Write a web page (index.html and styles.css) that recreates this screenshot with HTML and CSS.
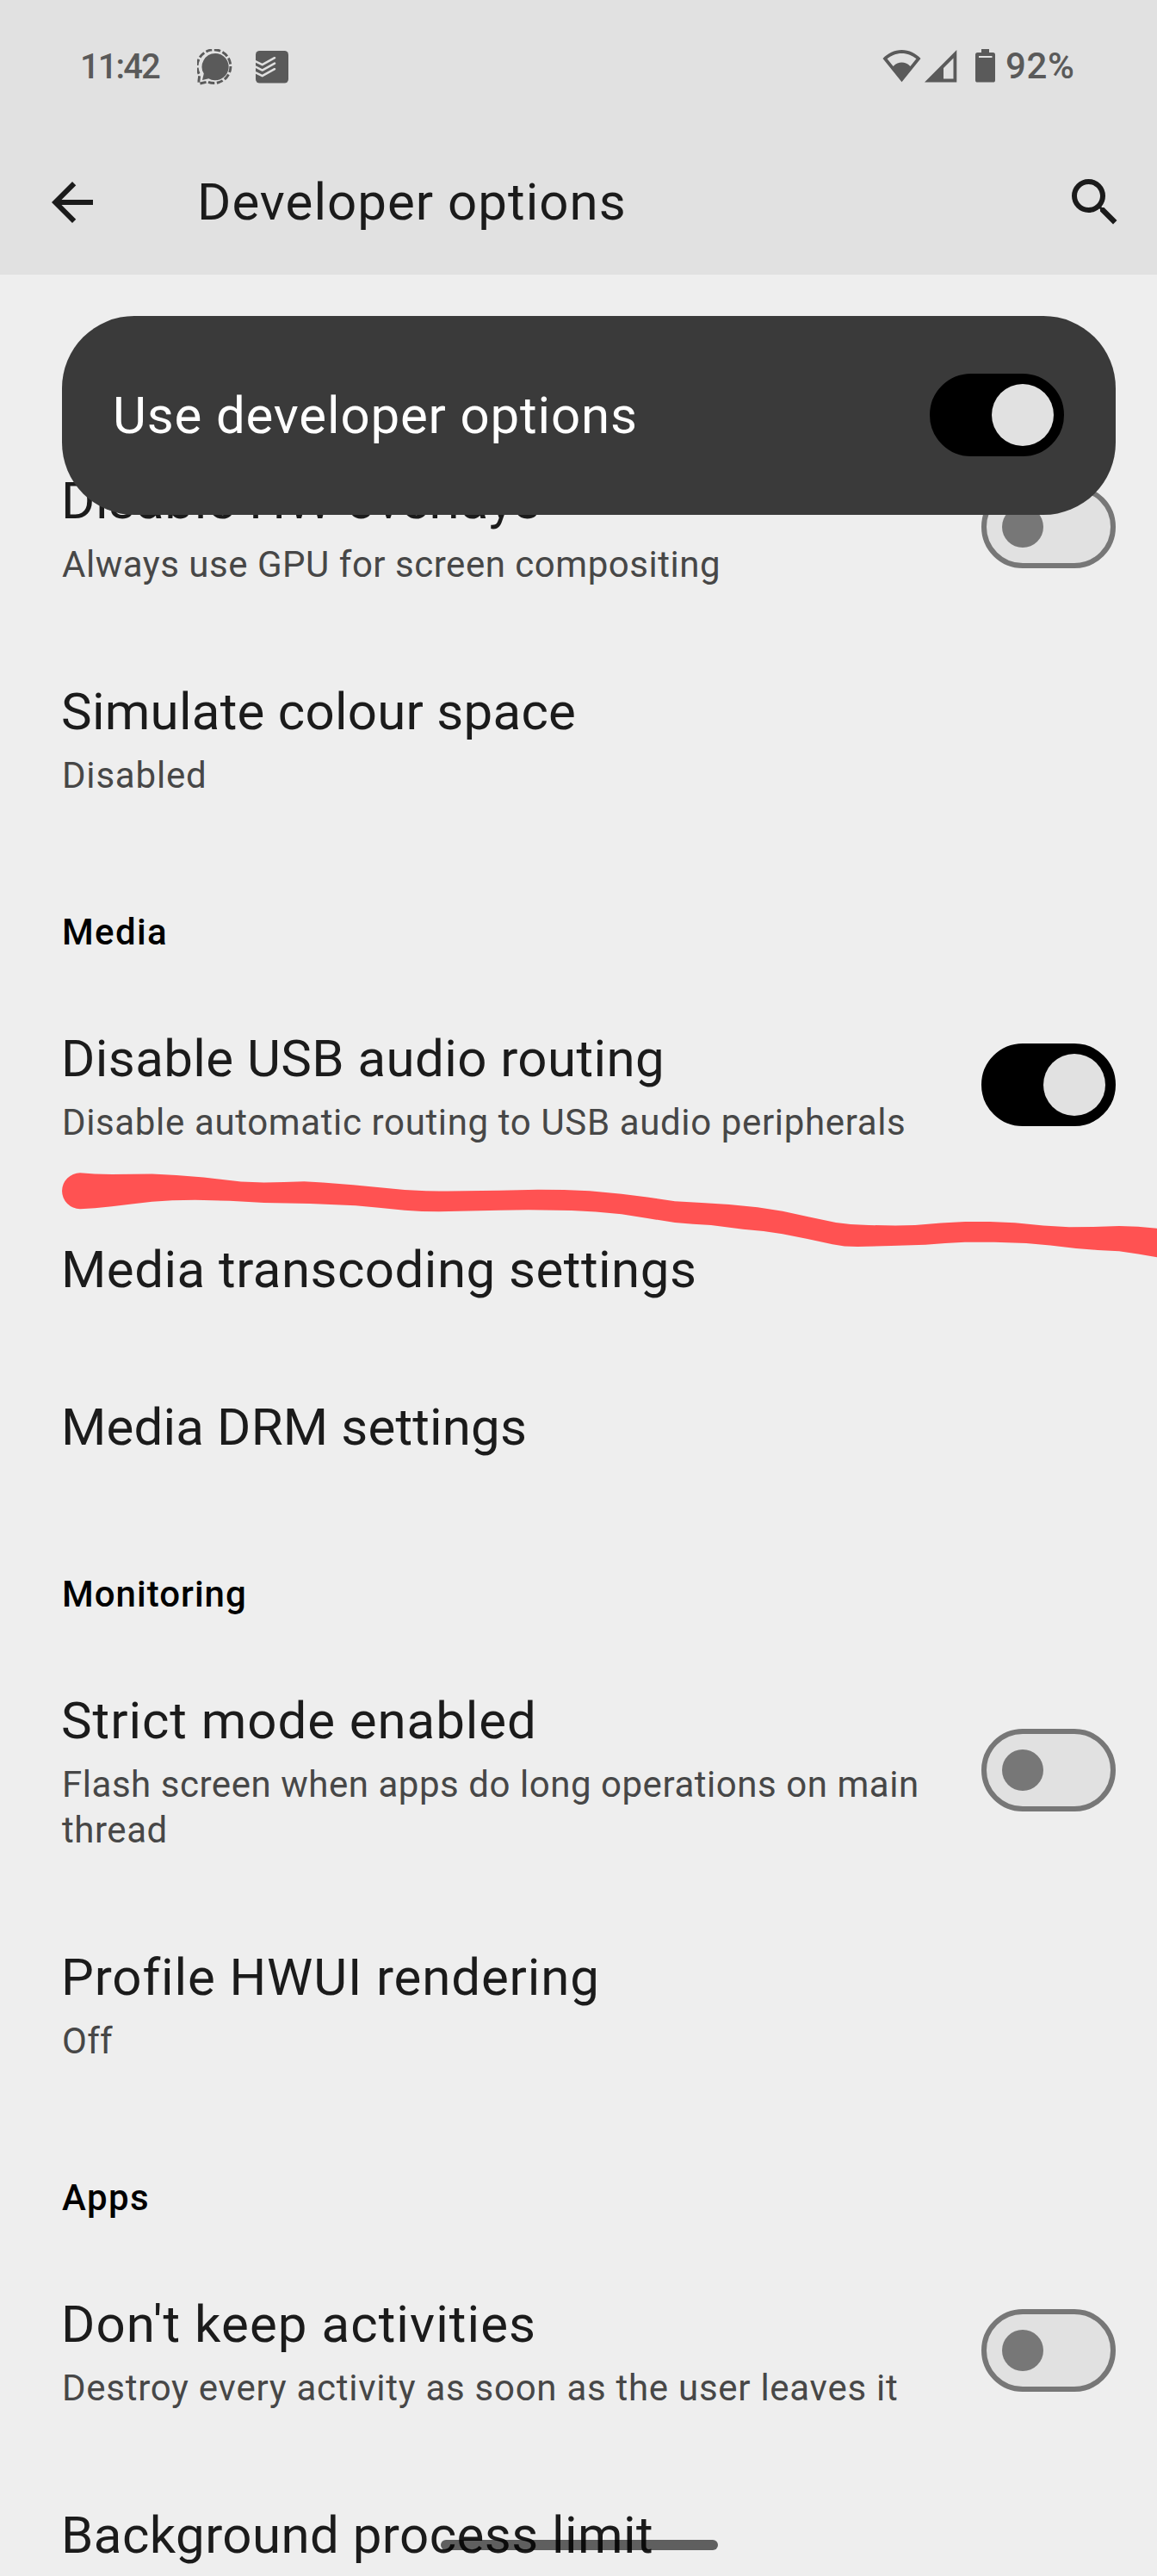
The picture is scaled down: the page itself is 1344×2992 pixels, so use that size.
FILE: index.html
```html
<!DOCTYPE html>
<html lang="en-GB">
<head>
<meta charset="utf-8">
<title>Developer options</title>
<link rel="stylesheet" href="styles.css">
</head>
<body>
<div class="screen">
  <header class="header">
    <div class="status">
      <span class="clock">11:42</span>
      <svg class="ic-chat" width="42" height="42" viewBox="0 0 42 42" fill="#5a5a5a">
        <path d="M21 5a15.6 15.6 0 1 1-7.6 29.2L6 36l1.8-7.4A15.6 15.6 0 0 1 21 5z"/>
        <path d="M2.8 30A19.4 19.4 0 1 1 12 38L3.3 40Q1.3 40.2 1.8 38Z" fill="none" stroke="#5a5a5a" stroke-width="2.9" stroke-dasharray="7.3 2.6" stroke-dashoffset="-1.5"/>
      </svg>
      <svg class="ic-tasks" width="38" height="38" viewBox="0 0 38 38">
        <rect width="38" height="37.6" rx="4.5" fill="#5a5a5a"/>
        <g fill="none" stroke="#e1e1e1" stroke-width="2.5" stroke-linecap="round" stroke-linejoin="round">
          <path d="M-1 11.8L7.7 16.2L22 8.2"/><path d="M-1 18.2L7.7 22.6L22 14.6"/><path d="M-1 24.8L7.7 29.2L22 21.2"/>
        </g>
      </svg>
      <span class="spacer"></span>
      <svg class="ic-wifi" width="45" height="39" viewBox="0 0 45 39" fill="#5a5a5a">
        <path fill-rule="evenodd" d="M.5 11C6 5 14 1 22.5 1S39 5 44.5 11L22.5 38.2ZM5.6 11.3L12.6 20C16 16.6 19 15.5 22.5 15.5S29 16.6 32.4 20L39.4 11.3C35 7.5 29 5 22.5 5S10 7.5 5.6 11.3Z"/>
      </svg>
      <svg class="ic-cell" width="38" height="39" viewBox="0 0 38 39" fill="#5a5a5a">
        <path fill-rule="evenodd" d="M37.3 1V38.4H0ZM22 22V34.5H33.5V10.5Z"/>
      </svg>
      <svg class="ic-battery" width="23" height="39" viewBox="0 0 23 39" fill="#5a5a5a">
        <path d="M7 0H16V4H20.500Q23 4 23 6.500V36Q23 38.600 20.500 38.600H2.500Q0 38.600 0 36V6.500Q0 4 2.500 4H7Z"/>
        <path fill="#e1e1e1" d="M4 8H19.500V10H4Z"/>
      </svg>
      <span class="percent">92%</span>
    </div>
    <div class="appbar">
      <svg width="72" height="72" viewBox="0 0 24 24" fill="#1b1b1b"><path d="M20 11H7.830l5.590-5.590L12 4l-8 8 8 8 1.410-1.410L7.830 13H20v-2z"/></svg>
      <h1 class="title t-screen">Developer options</h1>
      <svg width="72" height="72" viewBox="0 0 24 24" fill="#1b1b1b"><path d="M15.500 14h-.79l-.28-.27A6.471 6.471 0 0 0 16 9.500 6.500 6.500 0 1 0 9.500 16c1.610 0 3.090-.59 4.230-1.570l.27.28v.79l5 4.990L20.490 19l-4.990-5zm-6 0C7.010 14 5 11.990 5 9.500S7.010 5 9.500 5 14 7.010 14 9.500 11.990 14 9.500 14z"/></svg>
    </div>
  </header>

  <main class="list">
    <div class="row">
      <div class="text"><div class="title t-overlays">Disable HW overlays</div><div class="sub s-overlays">Always use GPU for screen compositing</div></div>
      <span class="switch"><span class="thumb"></span></span>
    </div>
    <div class="row">
      <div class="text"><div class="title t-colour">Simulate colour space</div><div class="sub s-colour">Disabled</div></div>
    </div>
    <h2 class="section h-media">Media</h2>
    <div class="row">
      <div class="text"><div class="title t-usb">Disable USB audio routing</div><div class="sub s-usb">Disable automatic routing to USB audio peripherals</div></div>
      <span class="switch on"><span class="thumb"></span></span>
    </div>
    <div class="row single">
      <div class="text"><div class="title t-transcoding">Media transcoding settings</div></div>
    </div>
    <div class="row single">
      <div class="text"><div class="title t-drm">Media DRM settings</div></div>
    </div>
    <h2 class="section h-monitoring">Monitoring</h2>
    <div class="row">
      <div class="text"><div class="title t-strict">Strict mode enabled</div><div class="sub s-strict">Flash screen when apps do long operations on main thread</div></div>
      <span class="switch tall"><span class="thumb"></span></span>
    </div>
    <div class="row">
      <div class="text"><div class="title t-profile">Profile HWUI rendering</div><div class="sub s-profile">Off</div></div>
    </div>
    <h2 class="section h-apps">Apps</h2>
    <div class="row">
      <div class="text"><div class="title t-activities">Don't keep activities</div><div class="sub s-activities">Destroy every activity as soon as the user leaves it</div></div>
      <span class="switch"><span class="thumb"></span></span>
    </div>
    <div class="row single">
      <div class="text"><div class="title t-limit">Background process limit</div></div>
    </div>
  </main>

  <div class="card">
    <div class="title t-main">Use developer options</div>
    <span class="switch on"><span class="thumb"></span></span>
  </div>

  <svg class="marker" width="1344" height="120" viewBox="0 1350 1344 120" fill="#ff5252">
    <path d="M93 1362.300L110 1363.500L130 1364L176.700 1363.500L205 1365L236.700 1367.500L280 1372.500L306.700 1373.500L330 1373L353.300 1372.300L375 1373.500L410 1376.300L470 1382L495 1383.300L520 1383.500L580 1382.800L625 1381.700L655 1382L685 1383.200L722 1386.700L752 1390.500L784 1395.300L815 1397L847 1399L880 1402.300L909 1406.700L940 1413.500L971 1420L988 1422L1009 1423L1040 1423.500L1063 1423L1093 1420.500L1121 1419L1150 1419L1179 1420.300L1212 1423.500L1242 1425.300L1270 1425L1300 1424L1322 1424.700L1344 1426.700V1460.300L1322 1456.500L1300 1453.300L1275 1452L1250 1450L1220 1446.500L1192 1444L1155 1442.700L1121 1442.700L1098 1444L1075 1445.700L1035 1447L996 1448L981 1447.500L967 1445.300L938 1439L909 1433.300L887 1430L863 1427.700L826 1423L805 1421.800L784 1420L752 1415L722 1410.300L692 1407.500L664 1406L614 1405.300L580 1405.700L510 1407.300L490 1407L470 1405.700L440 1402.800L413 1400.300L360 1398L306.700 1397L266.700 1394.700L226.700 1393.700L200 1394.200L176.700 1395.700L155 1398.300L130 1401.300L110 1403.200L93 1404.200A20.900 20.900 0 0 1 93 1362.300Z"/>
  </svg>
  <div class="gesture-bar"></div>
</div>
</body>
</html>
```
FILE: styles.css
```css
* { box-sizing: border-box; }
body { margin: 0; background: #eee; font-family: Roboto, sans-serif; }
.screen { position: relative; width: 1344px; height: 2992px; overflow: hidden; background: #eee; }
svg { display: block; flex: none; }

/* Status bar and app bar */
.header { height: 319px; background: #e1e1e1; }
.status { display: flex; align-items: flex-start; height: 150px; padding: 50px 94px 0 93px; color: #5a5a5a; font-weight: 500; }
.clock { width: 136px; font-size: 40px; line-height: 55px; letter-spacing: -1.95px; }
.percent { margin-left: 12px; width: 82px; font-size: 42px; line-height: 53px; letter-spacing: .6px; }
.spacer { flex: 1; }
.ic-chat { margin-top: 7px; }
.ic-tasks { margin: 9px 0 0 26px; }
.ic-wifi { margin-top: 7px; }
.ic-cell { margin: 7px 0 0 4px; }
.ic-battery { margin: 7px 0 0 21px; }
.appbar { display: flex; align-items: center; height: 169px; padding: 0 36px 0 48px; }
.appbar .title { flex: 1; margin: 0 0 0 109px; }

/* Preference rows */
.title { font-size: 60px; line-height: 71px; font-weight: 400; color: #1b1b1b; white-space: nowrap; }
.sub { margin-top: 12px; font-size: 42px; line-height: 53px; color: #474747; }
.list { padding: 173px 48px 0 72px; }
.row { display: flex; align-items: center; justify-content: space-between; padding: 54px 0 55px; }
.row.single { padding-bottom: 58px; }
.row .title { margin-left: -1px; }
.text { width: 1020px; }
.section { margin: 0; padding: 74px 0 31px; font-size: 42px; line-height: 53px; font-weight: 500; color: #000; }

/* Switches */
.switch { flex: none; display: flex; align-items: center; width: 156px; height: 96px; margin-bottom: 4px; padding-left: 18px; border: 6px solid #777; border-radius: 48px; background: #e1e1e1; }
.switch.tall { margin-bottom: 3px; }
.switch.on { justify-content: flex-end; padding: 0 6px 0 0; border-color: #000; background: #000; }
.thumb { width: 48px; height: 48px; border-radius: 50%; background: #777; }
.on .thumb { width: 72px; height: 72px; background: #e1e1e1; }

/* Floating main toggle */
.card { position: absolute; left: 72px; top: 367px; width: 1224px; height: 231px; display: flex; align-items: center; justify-content: space-between; padding: 0 60px 0 59px; border-radius: 84px; background: #3a3a3a; }
.card .title { color: #fff; }
.card .switch { margin-bottom: 1px; }

.marker { position: absolute; left: 0; top: 1350px; }
.gesture-bar { position: absolute; left: 512px; top: 2950px; width: 322px; height: 12px; border-radius: 6px; background: rgba(0, 0, 0, .6); }

.list .row:nth-child(n) { margin-right: 0; }

/* Tracking */
.t-screen { letter-spacing: 1.02px; }
.t-main { letter-spacing: .83px; }
.t-overlays { letter-spacing: .7px; }
.t-colour { letter-spacing: .26px; }
.t-usb { letter-spacing: .42px; }
.t-transcoding { letter-spacing: .48px; }
.t-drm { letter-spacing: .16px; }
.t-strict { letter-spacing: .94px; }
.t-profile { letter-spacing: .86px; }
.t-activities { letter-spacing: 1.07px; }
.t-limit { letter-spacing: .44px; }
.s-overlays { letter-spacing: .52px; }
.s-colour { letter-spacing: .8px; }
.s-usb { letter-spacing: .64px; }
.s-strict { letter-spacing: .54px; }
.s-profile { letter-spacing: .25px; }
.s-activities { letter-spacing: .73px; }
.h-media { letter-spacing: 1.35px; }
.h-monitoring { letter-spacing: 1.01px; }
.h-apps { letter-spacing: 1.43px; }
```
